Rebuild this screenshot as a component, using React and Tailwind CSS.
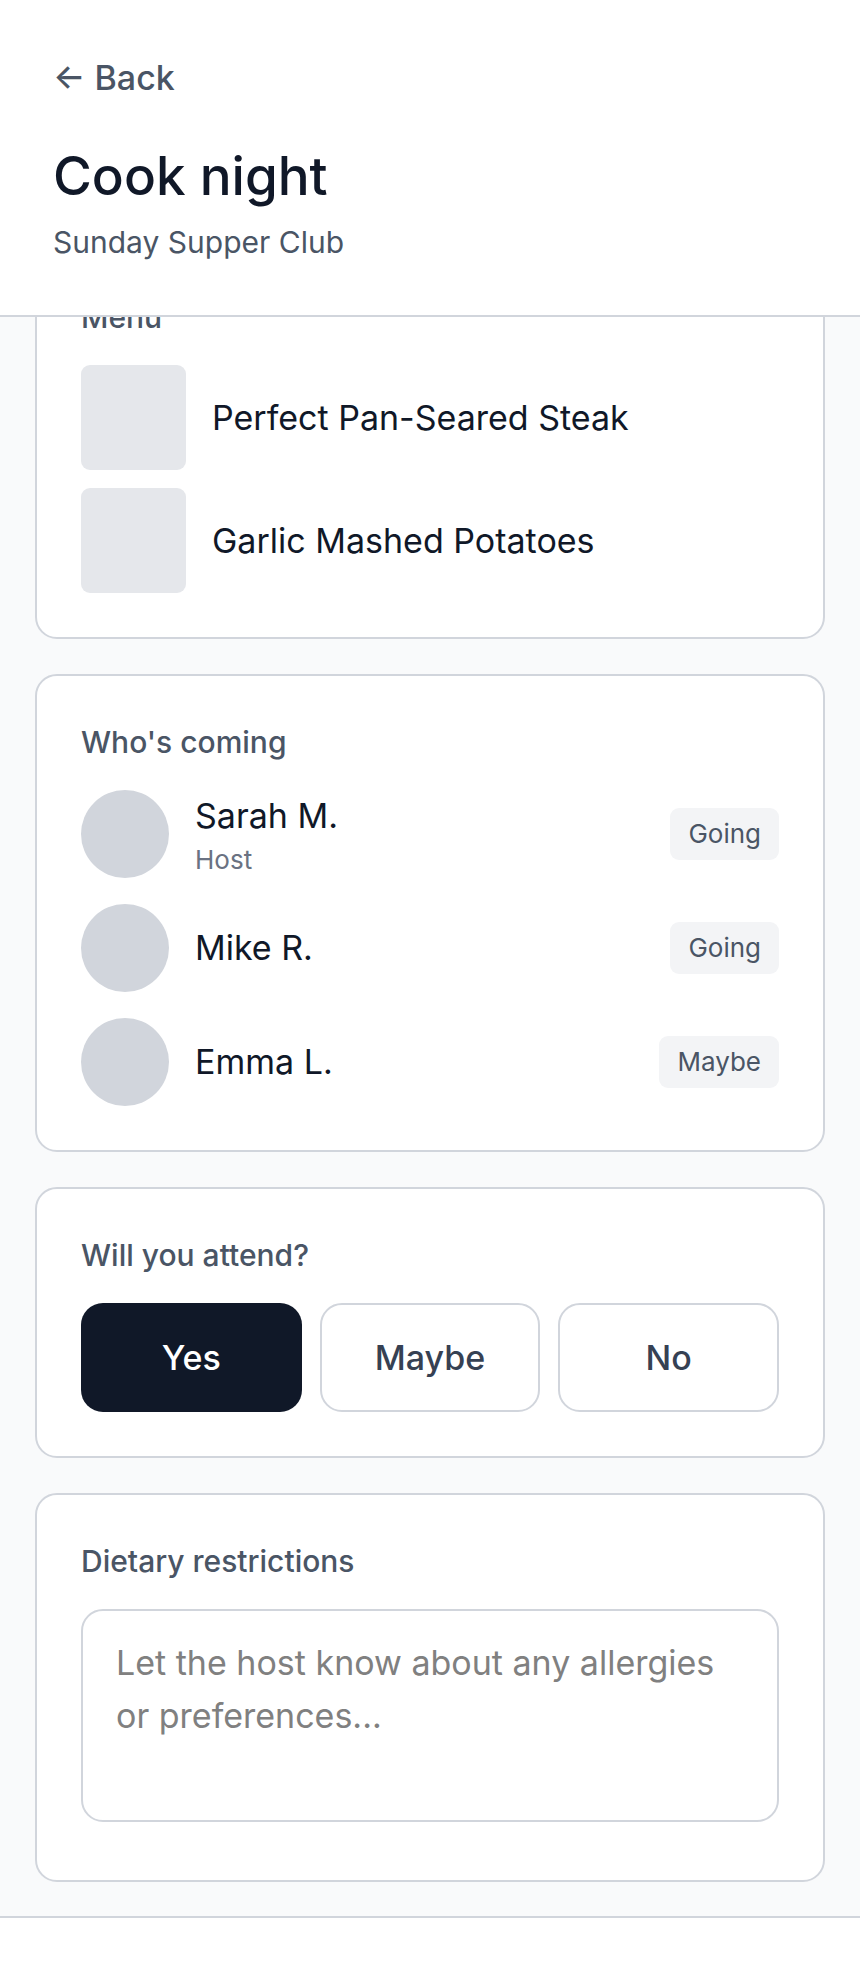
const people = [
  { name: "Sarah M.", role: "Host", status: "Going" },
  { name: "Mike R.", status: "Going" },
  { name: "Emma L.", status: "Maybe" },
];
const dishes = ["Perfect Pan-Seared Steak", "Garlic Mashed Potatoes"];

function Card({ title, id, children }) {
  return (
    <section className="rounded-[22px] border-2 border-gray-300 bg-white p-11">
      <h2 id={id} className="mb-[26px] text-[30px] leading-[44px] font-medium text-gray-600">{title}</h2>
      {children}
    </section>
  );
}

export default function App() {
  return (
    <div className="flex min-h-screen flex-col bg-gray-50 font-['Inter',sans-serif] text-gray-900">
      <header className="sticky top-0 z-10 border-b-2 border-gray-300 bg-white px-[53px] pt-[53px] pb-[51px]">
        <a href="#back" className="inline-block text-[34px] leading-[50px] font-medium text-gray-600">← Back</a>
        <h1 className="mt-10 text-[53px] leading-[66px] font-medium">Cook night</h1>
        <p className="mt-[11px] text-[30px] leading-[44px] text-gray-600">Sunday Supper Club</p>
      </header>
      <main className="-mt-17 flex flex-col gap-[35px] px-[35px] pb-[34px]">
        <Card title="Menu">
          <ul className="flex flex-col gap-[18px]">
            {dishes.map((d) => (
              <li key={d} className="flex items-center gap-[26px] text-[34px] leading-[52px]">
                <span className="size-[105px] shrink-0 rounded-[9px] bg-gray-200" />
                {d}
              </li>
            ))}
          </ul>
        </Card>
        <Card title="Who's coming">
          <ul className="flex flex-col gap-[26px]">
            {people.map((p) => (
              <li key={p.name} className="flex items-center gap-[26px]">
                <span className="size-22 shrink-0 rounded-full bg-gray-300" />
                <div className="flex-1">
                  <p className="text-[34px] leading-[52px]">{p.name}</p>
                  {p.role && <p className="text-[26px] leading-9 text-gray-500">{p.role}</p>}
                </div>
                <span className="rounded-[9px] bg-gray-100 px-[18px] py-2 text-[26px] leading-9 text-gray-600">{p.status}</span>
              </li>
            ))}
          </ul>
        </Card>
        <Card title="Will you attend?">
          <div className="grid grid-cols-3 gap-[18px]">
            <button className="h-[109px] rounded-[22px] bg-gray-900 text-[34px] font-medium text-white">Yes</button>
            <button className="h-[109px] rounded-[22px] border-2 border-gray-300 text-[34px] font-medium text-gray-700">Maybe</button>
            <button className="h-[109px] rounded-[22px] border-2 border-gray-300 text-[34px] font-medium text-gray-700">No</button>
          </div>
        </Card>
        <Card title="Dietary restrictions" id="diet">
          <textarea aria-labelledby="diet" rows="3" className="mb-[14px] block w-full resize-none rounded-[22px] border-2 border-gray-300 px-[33px] py-[25px] text-[34px] leading-[53px] placeholder:text-[#808080]" placeholder="Let the host know about any allergies or preferences..." />
        </Card>
      </main>
      <footer className="min-h-13 grow border-t-2 border-gray-300 bg-white" />
    </div>
  );
}
